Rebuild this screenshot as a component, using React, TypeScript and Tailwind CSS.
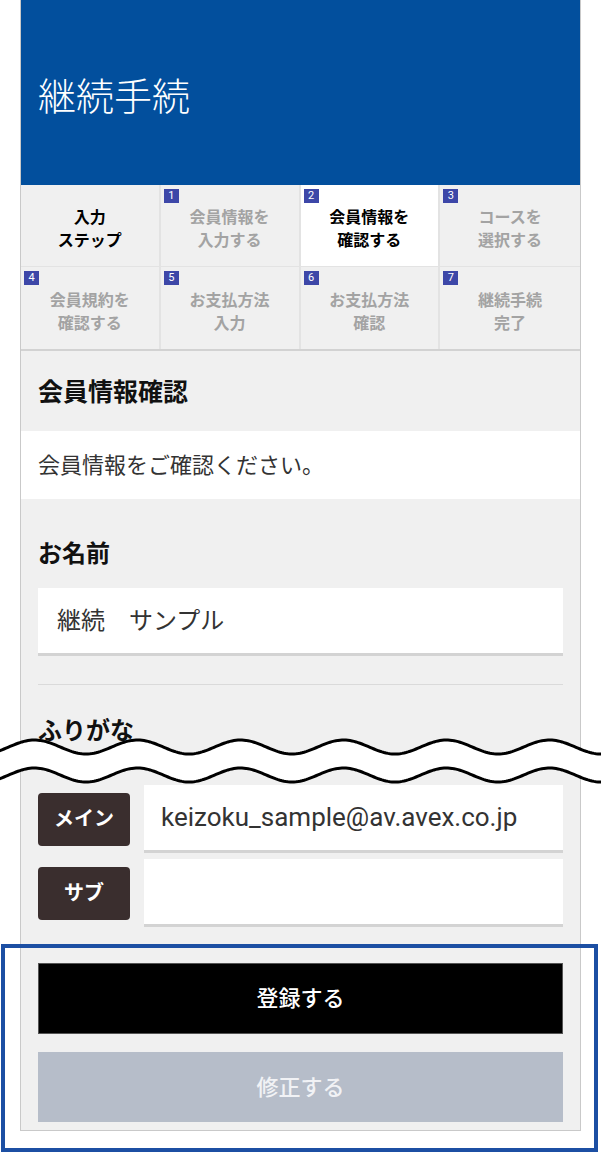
import React from 'react';

const steps = [
  { num: '', lines: ['入力', 'ステップ'], state: 'label' },
  { num: '1', lines: ['会員情報を', '入力する'], state: 'off' },
  { num: '2', lines: ['会員情報を', '確認する'], state: 'on' },
  { num: '3', lines: ['コースを', '選択する'], state: 'off' },
  { num: '4', lines: ['会員規約を', '確認する'], state: 'off' },
  { num: '5', lines: ['お支払方法', '入力'], state: 'off' },
  { num: '6', lines: ['お支払方法', '確認'], state: 'off' },
  { num: '7', lines: ['継続手続', '完了'], state: 'off' },
];

// wavy line points for the "cut" mark
const wave = (c: number, reverse = false) => {
  const pts: string[] = [];
  for (let x = -10; x <= 612; x += 2) {
    const y = c - 7 * Math.cos((2 * Math.PI * (x - 34.5)) / 103);
    pts.push(`${x},${y.toFixed(2)}`);
  }
  if (reverse) pts.reverse();
  return pts;
};

const WaveCut: React.FC = () => {
  const top = wave(12);
  const bottom = wave(40, true);
  return (
    <svg className="absolute left-0 top-[735px]" width="601" height="52" viewBox="0 0 601 52">
      <polygon points={[...top, ...bottom].join(' ')} fill="#ffffff" />
      <polyline points={top.join(' ')} fill="none" stroke="#000" strokeWidth="3" />
      <polyline points={wave(40).join(' ')} fill="none" stroke="#000" strokeWidth="3" />
    </svg>
  );
};

export default function App() {
  return (
    <div className="relative w-[601px] h-[1153px] bg-white overflow-hidden font-['Roboto','Noto_Sans_CJK_JP',sans-serif]">
      <div className="ml-[20px] w-[561px] border-x border-b border-[#c9c9c9] bg-[#f0f0f0]">
        {/* header */}
        <div className="h-[185px] bg-[#024f9d] flex items-center pl-[17px] pt-[2px]">
          <h1 className="text-[38px] font-light text-white font-['Noto_Sans_CJK_JP',sans-serif]">継続手続</h1>
        </div>

        {/* steps */}
        <div className="grid grid-cols-4 border-b-2 border-[#d2d2d2]">
          {steps.map((s, i) => (
            <div
              key={i}
              className={`relative h-[82px] flex items-center justify-center pt-[7px] border-[#e3e3e3] ${i % 4 !== 3 ? 'border-r-2' : ''} ${i < 4 ? 'border-b' : ''} ${
                s.state === 'on' ? 'bg-white' : 'bg-[#f0f0f0]'
              }`}
            >
              {s.num && (
                <span className="absolute left-[3px] top-[4px] w-[15px] h-[14px] bg-[#3d47a8] text-white text-[11px] leading-[14px] text-center font-['Roboto',sans-serif]">
                  {s.num}
                </span>
              )}
              <div
                className={`text-center text-[16px] leading-[23px] font-bold ${
                  s.state === 'off' ? 'text-[#a3a3a3]' : 'text-black'
                }`}
              >
                {s.lines[0]}
                <br />
                {s.lines[1]}
              </div>
            </div>
          ))}
        </div>

        {/* section title */}
        <div className="h-[80px] flex items-center pl-[17px] pt-[4px]">
          <h2 className="text-[25px] font-bold text-[#111]">会員情報確認</h2>
        </div>
        <div className="h-[68px] bg-white flex items-center pl-[17px]">
          <p className="text-[22px] text-[#333]">会員情報をご確認ください。</p>
        </div>

        <div className="px-[17px] pt-[37px]">
          <h3 className="text-[24px] leading-[36px] font-bold text-[#111]">お名前</h3>
          <div className="mt-[16px] h-[68px] bg-white border-b-[3px] border-[#d3d3d3] flex items-center pl-[19px]">
            <span className="text-[24px] text-[#333]">継続　サンプル</span>
          </div>
          <div className="mt-[28px] h-px bg-[#dadada]" />
          <h3 className="mt-[28px] text-[24px] leading-[36px] font-bold text-[#111]">ふりがな</h3>

          <div className="mt-[36px] flex flex-col gap-[6px]">
            {['メイン', 'サブ'].map((tag, i) => (
              <div key={tag} className="flex items-center gap-[14px]">
                <span className="w-[92px] h-[53px] shrink-0 rounded-[4px] bg-[#3a2e2e] text-white text-[20px] font-bold flex items-center justify-center">
                  {tag}
                </span>
                <div className="flex-1 h-[68px] bg-white border-b-[3px] border-[#d3d3d3] flex items-center pl-[17px]">
                  {i === 0 && <span className="text-[26px] text-[#333]">keizoku_sample@av.avex.co.jp</span>}
                </div>
              </div>
            ))}
          </div>

          <button className="mt-[36px] w-full h-[71px] bg-black border border-[#555] text-white text-[22px] font-medium">
            登録する
          </button>
          <button className="mt-[18px] mb-[8px] w-full h-[70px] bg-[#b6bdc9] text-[#f1f2f5] text-[22px] font-medium">
            修正する
          </button>
        </div>
      </div>

      <WaveCut />

      {/* highlight frame */}
      <div className="absolute left-[1px] top-[944px] w-[597px] h-[208px] border-[4px] border-[#1c4fa3] pointer-events-none" />
    </div>
  );
}
